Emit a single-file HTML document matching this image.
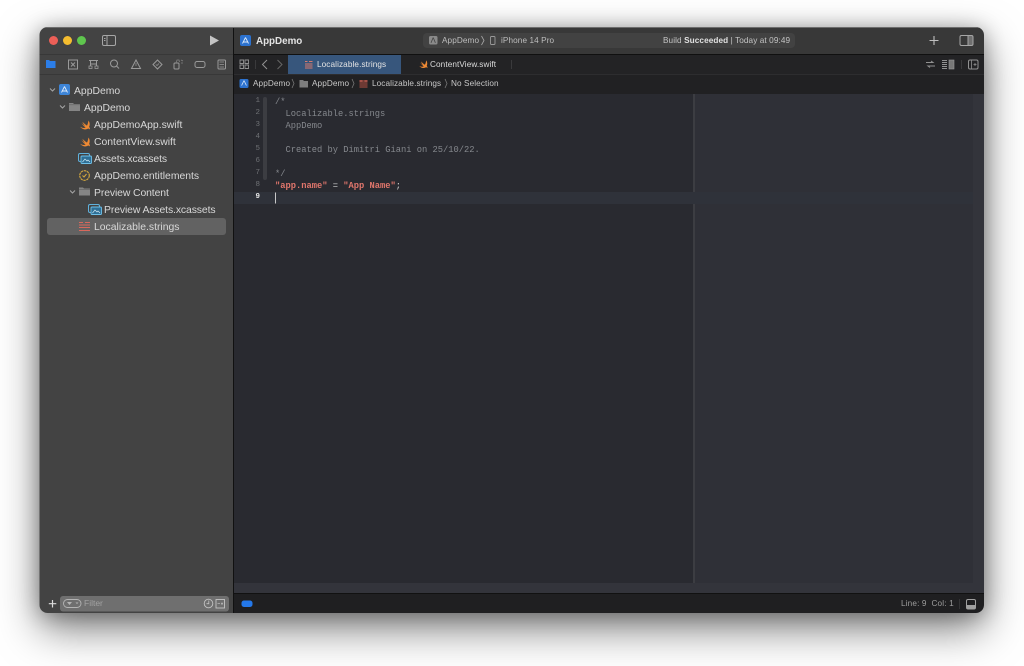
<!DOCTYPE html>
<html><head><meta charset="utf-8">
<style>
html,body{margin:0;padding:0;width:1024px;height:666px;overflow:hidden;background:#fff}
body{position:relative;font-family:"Liberation Sans",sans-serif}
#win{position:absolute;left:40px;top:27px;width:944px;height:586px;border-radius:8px;box-shadow:0 16px 42px rgba(0,0,0,.5),0 2px 20px rgba(0,0,0,.3);}
#ui{position:absolute;left:0;top:0;width:1024px;height:666px;filter:blur(.3px)}
.a{position:absolute;white-space:pre}
.r{position:absolute;left:0;top:0;width:1024px;height:666px}
.s{font-size:10.4px;color:#d8d8d8;line-height:14px;height:14px}
.t{font-size:8.2px;color:#c8c8c8;line-height:12px;height:12px;letter-spacing:.1px}
.c{font-family:"Liberation Mono",monospace;font-size:8.75px;line-height:12px;height:12px;color:#85888d;left:275px}
.n{font-family:"Liberation Mono",monospace;font-size:7.5px;line-height:12px;height:12px;color:#6f7175;text-align:right;left:240px;width:20px}
</style></head>
<body>
<div id="win"></div>
<div id="ui">
<svg class="r" width="1024" height="666" viewBox="0 0 1024 666" fill="none">
<defs><clipPath id="w"><rect x="39.5" y="27" width="944.5" height="586" rx="8"/></clipPath></defs>
<g clip-path="url(#w)">
<rect x="39" y="27" width="194" height="586" fill="#434343"/>
<rect x="233" y="27" width="751" height="27" fill="#383838"/>
<rect x="233" y="54" width="751" height="1" fill="#101010"/>
<rect x="233" y="55" width="751" height="19" fill="#232325"/>
<rect x="233" y="74" width="751" height="20" fill="#212123"/>
<rect x="233" y="74" width="751" height="1" fill="#2d2d2f"/>
<rect x="233" y="94" width="751" height="500" fill="#292a30"/>
<rect x="695" y="94" width="289" height="500" fill="#2f3037"/>
<rect x="693" y="94" width="2" height="500" fill="#3c3d42"/>
<rect x="233" y="192" width="741" height="12" fill="#2f323a"/>
<rect x="973" y="94" width="11" height="500" fill="#33343b"/>
<rect x="233" y="583" width="751" height="11" fill="#33343b"/>
<rect x="233" y="593" width="751" height="1" fill="#111"/>
<rect x="233" y="594" width="751" height="19" fill="#1f1f21"/>
<rect x="233" y="27" width="1" height="586" fill="#111"/>
<rect x="39" y="54" width="194" height="1" fill="#383838"/>
<rect x="39" y="74" width="194" height="1" fill="#383838"/>
<rect x="39.5" y="27" width="944.5" height="1" fill="#6d6d6d"/>
</g>
<circle cx="53.5" cy="40.5" r="4.5" fill="#ec5f57"/>
<circle cx="67.5" cy="40.5" r="4.5" fill="#f5bd2f"/>
<circle cx="81.5" cy="40.5" r="4.5" fill="#5fc64e"/>
<rect x="102.5" y="35.5" width="13" height="10" rx="1.5" stroke="#a6a6a6"/>
<path d="M107 36v9M104 38.5h1.500M104 40.500h1.500" stroke="#a6a6a6"/>
<path d="M210 35.500v10l9-5z" fill="#c4c4c4"/>
<!-- nav icons -->
<path d="M46 60h3l1 1h5.500v7H46z" fill="#2c7ee8"/>
<rect x="68.500" y="60" width="9" height="9" stroke="#9a9a9a"/>
<path d="M71 62.500l4 4M75 62.500l-4 4" stroke="#9a9a9a"/>
<path d="M89 60.500h9M90.500 60.500v3.500h6v-3.500M90.500 64v2M96.500 64v2" stroke="#9a9a9a"/>
<rect x="89" y="66" width="3" height="2.500" stroke="#9a9a9a" stroke-width=".8"/><rect x="95" y="66" width="3" height="2.500" stroke="#9a9a9a" stroke-width=".8"/>
<circle cx="114" cy="63.500" r="3.500" stroke="#9a9a9a"/><path d="M116.500 66l2.500 2.500" stroke="#9a9a9a"/>
<path d="M136 60l4.500 8.500h-9z" stroke="#9a9a9a"/><path d="M136 63v3" stroke="#9a9a9a" stroke-width=".7"/>
<path d="M157.500 60l4.500 4.500-4.500 4.500-4.500-4.500z" stroke="#9a9a9a"/><path d="M155.800 64.500l1.200 1 2-2" stroke="#9a9a9a" stroke-width=".7"/>
<rect x="174" y="63" width="5" height="6" rx="1" stroke="#9a9a9a"/><path d="M176 63l1-3h2l.5 2M181 60l2 1M181 63h2" stroke="#808080" stroke-width=".8"/>
<rect x="195" y="61.500" width="10" height="6" rx="2" stroke="#9a9a9a"/>
<rect x="218" y="60" width="7.500" height="9" rx="1" stroke="#9a9a9a"/><path d="M219.500 62h4.500M219.500 64.500h4.500M219.500 67h4.500" stroke="#9a9a9a" stroke-width=".7"/>
<!-- tree -->
<path d="M50 88.500l2.500 2.500 2.500-2.500M60 105.500l2.500 2.500 2.500-2.500M70 190.500l2.500 2.500 2.500-2.500" stroke="#a6a6a6"/>
<rect x="59" y="84" width="11" height="11" rx="2" fill="#3d85d8"/>
<path d="M64.500 86.500l-3 6M64.500 86.500l3 6M62 91h5" stroke="#dbe9fa" stroke-width=".9"/>
<path d="M69 103h4l1 1h6v7H69z" fill="#858585"/><path d="M69 104.800h11" stroke="#5f5f5f" stroke-width=".6"/>
<path d="M79 187.500h4l1 1h6v7H79z" fill="#858585"/><path d="M79 189.300h11" stroke="#5f5f5f" stroke-width=".6"/>
<rect x="47" y="218" width="179" height="17" rx="3" fill="#626262"/>
<path transform="translate(80,120)" d="M8.500.5c1.600 2.400 1.400 4.800.6 6.400.9 1.100 1 2.100.8 2.600-.5-.9-1.500-1-2.200-.7C5.500 9.900 2.500 9.800.1 6.800c2 1.300 4 1.500 5.500.7C3.900 6.200 2.400 4.500 1.300 3c1.300 1.200 2.900 2.400 4 3.100C4 4.800 2.900 3.300 2.400 1.700 4 3.400 6 5 7 5.600 7.900 4 8.100 2.300 8.500.5z" fill="#ef8a34"/>
<path transform="translate(80,137)" d="M8.500.5c1.600 2.400 1.400 4.800.6 6.400.9 1.100 1 2.100.8 2.600-.5-.9-1.500-1-2.200-.7C5.500 9.900 2.500 9.800.1 6.800c2 1.300 4 1.500 5.500.7C3.900 6.200 2.400 4.500 1.300 3c1.300 1.200 2.900 2.400 4 3.100C4 4.800 2.900 3.300 2.400 1.700 4 3.400 6 5 7 5.600 7.900 4 8.100 2.300 8.500.5z" fill="#ef8a34"/>
<path transform="translate(419,60) scale(.85)" d="M8.500.5c1.600 2.400 1.400 4.800.6 6.400.9 1.100 1 2.100.8 2.600-.5-.9-1.500-1-2.200-.7C5.500 9.900 2.500 9.800.1 6.800c2 1.300 4 1.500 5.500.7C3.900 6.200 2.400 4.500 1.300 3c1.300 1.200 2.900 2.400 4 3.100C4 4.800 2.900 3.300 2.400 1.700 4 3.400 6 5 7 5.600 7.900 4 8.100 2.300 8.500.5z" fill="#ef8a34"/>
<rect x="78.500" y="153.500" width="11" height="8" rx="1.500" stroke="#5fb2de"/><rect x="81" y="156" width="10.500" height="7.500" rx="1" fill="#2e6f96" stroke="#6fc0e8" stroke-width=".9"/><path d="M82.500 162l2.500-3 2 2 1-1 2 2" stroke="#cfe8f5" stroke-width=".7"/>
<rect x="88.500" y="204.500" width="11" height="8" rx="1.500" stroke="#5fb2de"/><rect x="91" y="207" width="10.500" height="7.500" rx="1" fill="#2e6f96" stroke="#6fc0e8" stroke-width=".9"/><path d="M92.500 213l2.500-3 2 2 1-1 2 2" stroke="#cfe8f5" stroke-width=".7"/>
<circle cx="84.500" cy="175.500" r="4.800" stroke="#d6a93e" stroke-width="1.100" stroke-dasharray="2.500 .6"/><path d="M82.500 175.500l1.500 1.500 2.500-3" stroke="#d6a93e"/>
<path d="M79 222.500h4M79 225h11M79 227.500h11M79 230.500h11M85 222.500h5" stroke="#d9685c" stroke-width="1.100"/>
<!-- sidebar bottom -->
<path d="M52.500 600v7.500M48.800 603.700h7.500" stroke="#dcdcdc" stroke-width="1.200"/>
<rect x="60" y="596" width="169" height="15.500" rx="3" fill="#6f6f6f"/>
<rect x="63.500" y="599.500" width="17.500" height="8" rx="4" stroke="#b4b4b4" stroke-width=".9"/>
<path d="M67 602h5l-2.500 3zM75.500 602.500l1.500 1.500 1.500-1.500" fill="#b4b4b4"/>
<circle cx="208.500" cy="603.500" r="4.300" stroke="#c4c4c4" stroke-width=".9"/><path d="M208.800 600.500v3.200h-2.300" stroke="#c4c4c4" stroke-width=".8"/>
<rect x="216" y="599.500" width="8.500" height="8.500" stroke="#c4c4c4" stroke-width=".9"/><path d="M217.500 603.700h2.500M221 603.700h2M222 602.500v2.500" stroke="#c4c4c4" stroke-width=".7"/>
<!-- toolbar -->
<rect x="240" y="35" width="11" height="11" rx="2" fill="#2c72cf"/>
<path d="M245.500 37.500l-3 6M245.500 37.500l3 6M243 42h5" stroke="#dbe9fa" stroke-width=".9"/>
<rect x="423" y="33" width="372" height="15" rx="4" fill="#424242"/>
<rect x="429" y="36" width="8.500" height="8.500" rx="1.500" fill="#8a8a8a"/><path d="M433.200 37.500l-2.200 5.300M433.200 37.500l2.200 5.300" stroke="#444" stroke-width=".8"/>
<path d="M481.500 36l2.500 4.500-2.500 4.500" stroke="#a8a8a8" stroke-width=".8"/>
<rect x="490.500" y="36.500" width="4.500" height="8" rx="1" stroke="#9a9a9a" stroke-width=".9"/>
<path d="M934 36v9M929.500 40.500h9" stroke="#bfbfbf" stroke-width="1.100"/>
<rect x="960" y="35.500" width="13" height="10" rx="1.500" stroke="#a6a6a6"/><path d="M968 36v9" stroke="#a6a6a6"/><rect x="968.500" y="36" width="4" height="9" fill="#a6a6a6" opacity=".5"/>
<!-- tabbar -->
<rect x="288" y="55" width="113" height="19" fill="#37567c"/>
<path d="M240 60h3.500v3.500H240zM245 60h3.500v3.500H245zM240 65h3.500v3.500H240zM245 65h3.500v3.500H245z" stroke="#929292" stroke-width=".9"/>
<path d="M255.500 60v9" stroke="#3a3a3c"/>
<path d="M267 60l-4.500 4.500L267 69" stroke="#929292"/>
<path d="M277.500 60l4.500 4.500L277.500 69" stroke="#666"/>
<path d="M305 61.500h2.500M305 64h7.500M305 66h7.500M305 68h7.500M309 61.500h3.500" stroke="#d97a6d" stroke-width=".9"/>
<path d="M511.500 60v9" stroke="#3a3a3c"/>
<path d="M926 62.500h7l-2-1.500M935 66h-7l2 1.500" stroke="#929292"/>
<path d="M942 60.500h5M942 62.500h5M942 64.500h5M942 66.500h5M942 68.500h5" stroke="#929292" stroke-width=".9"/><rect x="949" y="60" width="5" height="9" fill="#777" stroke="#999" stroke-width=".6"/>
<path d="M961.500 60v9" stroke="#3a3a3c"/>
<rect x="968.500" y="60" width="9.500" height="9" rx="1.500" stroke="#929292"/><path d="M971.500 60v9M973.500 64.500h3M975 63v3" stroke="#929292" stroke-width=".8"/>
<!-- breadcrumb -->
<rect x="239.500" y="79" width="9" height="9" rx="1.500" fill="#2c72cf"/><path d="M244 80.500l-2.400 5M244 80.500l2.400 5" stroke="#dbe9fa" stroke-width=".8"/>
<path d="M292 79l2 4.500-2 4.500M352 79l2 4.500-2 4.500M445 79l2 4.500-2 4.500" stroke="#777" stroke-width=".8"/>
<path d="M299.500 80h3.500l1 1h4v6.500h-8.500z" fill="#7d7d7d"/>
<rect x="359.500" y="80" width="8" height="8" fill="#6e3a34"/><path d="M359.500 81h3M364.500 81h3" stroke="#d9685c"/>
<!-- gutter -->
<rect x="263" y="97" width="4" height="83" rx="2" fill="#3c3d42"/>
<rect x="275" y="192.500" width="1" height="11" fill="#c8c8c8"/>
<!-- status -->
<rect x="241.500" y="600.500" width="11" height="6.500" rx="2.500" fill="#2478ea"/>
<path d="M959.500 599v10" stroke="#343436"/>
<rect x="966.500" y="599.500" width="9" height="9.500" rx="1.500" stroke="#a0a0a0"/><rect x="967" y="605" width="8" height="3.500" fill="#a0a0a0"/>
</svg>

<div class="a s" style="left:74px;top:85px">AppDemo</div>
<div class="a s" style="left:84px;top:102px">AppDemo</div>
<div class="a s" style="left:94px;top:119px">AppDemoApp.swift</div>
<div class="a s" style="left:94px;top:136px">ContentView.swift</div>
<div class="a s" style="left:94px;top:153px;letter-spacing:-.1px">Assets.xcassets</div>
<div class="a s" style="left:94px;top:170px">AppDemo.entitlements</div>
<div class="a s" style="left:94px;top:187px;letter-spacing:-.1px">Preview Content</div>
<div class="a s" style="left:104px;top:204px;letter-spacing:-.1px">Preview Assets.xcassets</div>
<div class="a s" style="left:94px;top:221px">Localizable.strings</div>
<div class="a" style="left:84px;top:597px;font-size:8.5px;line-height:12px;color:#a2a2a2">Filter</div>

<div class="a" style="left:256px;top:35px;font-size:9.8px;line-height:14px;font-weight:bold;color:#e4e4e4">AppDemo</div>
<div class="a t" style="left:442px;top:35px;color:#bdbdbd">AppDemo</div>
<div class="a t" style="left:501px;top:35px;color:#bdbdbd">iPhone 14 Pro</div>
<div class="a t" style="left:663px;top:35px;color:#c4c4c4">Build <b style="color:#e0e0e0">Succeeded</b> | Today at 09:49</div>

<div class="a t" style="left:317px;top:59px;color:#e4e4e4">Localizable.strings</div>
<div class="a t" style="left:430px;top:59px;color:#dcdcdc">ContentView.swift</div>

<div class="a t" style="left:253px;top:78px">AppDemo</div>
<div class="a t" style="left:312px;top:78px">AppDemo</div>
<div class="a t" style="left:372px;top:78px">Localizable.strings</div>
<div class="a t" style="left:451px;top:78px">No Selection</div>

<div class="a n" style="top:95px">1</div>
<div class="a n" style="top:107px">2</div>
<div class="a n" style="top:119px">3</div>
<div class="a n" style="top:131px">4</div>
<div class="a n" style="top:143px">5</div>
<div class="a n" style="top:155px">6</div>
<div class="a n" style="top:167px">7</div>
<div class="a n" style="top:179px">8</div>
<div class="a n" style="top:191px;color:#e8e8e8;font-weight:bold">9</div>

<div class="a c" style="top:96px">/*</div>
<div class="a c" style="top:108px">  Localizable.strings</div>
<div class="a c" style="top:120px">  AppDemo</div>
<div class="a c" style="top:144px">  Created by Dimitri Giani on 25/10/22.</div>
<div class="a c" style="top:168px">*/</div>
<div class="a c" style="top:180px;color:#e0766c;font-weight:bold">"app.name"<span style="color:#d0d0d0;font-weight:normal"> = </span>"App Name"<span style="color:#d0d0d0;font-weight:normal">;</span></div>

<div class="a" style="left:901px;top:598px;font-size:8.2px;line-height:12px;color:#9d9d9d;letter-spacing:.15px">Line: 9&nbsp; Col: 1</div>
</div>
</body></html>
